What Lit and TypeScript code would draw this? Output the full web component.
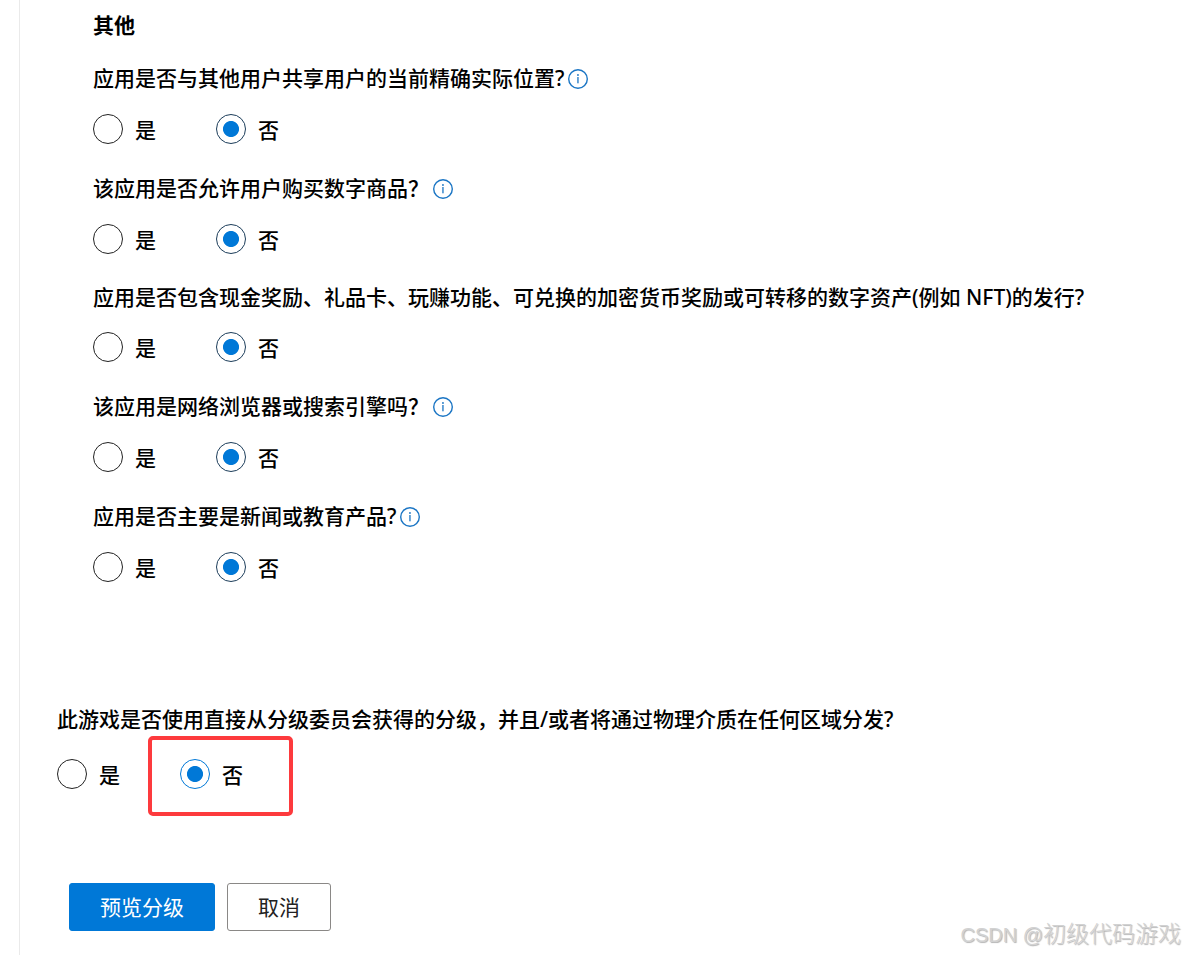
import { LitElement, html, css, svg } from "lit";
import { customElement, property } from "lit/decorators.js";

interface Question {
  id: string;
  text: string;
  info: boolean;
}

const QUESTIONS: Question[] = [
  { id: "location", text: "应用是否与其他用户共享用户的当前精确实际位置?", info: true },
  { id: "purchase", text: "该应用是否允许用户购买数字商品？", info: true },
  { id: "rewards", text: "应用是否包含现金奖励、礼品卡、玩赚功能、可兑换的加密货币奖励或可转移的数字资产(例如 NFT)的发行?", info: false },
  { id: "browser", text: "该应用是网络浏览器或搜索引擎吗？", info: true },
  { id: "news", text: "应用是否主要是新闻或教育产品?", info: true },
];

const infoIcon = svg`<svg width="20" height="20" viewBox="0 0 20 20" aria-hidden="true">
  <circle cx="10" cy="10" r="9.3" fill="none" stroke="#1a75c4" stroke-width="1.4"></circle>
  <rect x="9.3" y="8" width="1.3" height="6.3" fill="#1a75c4"></rect>
  <rect x="9.1" y="5.2" width="1.7" height="1.6" fill="#1a75c4"></rect>
</svg>`;

@customElement("yes-no-question")
class YesNoQuestion extends LitElement {
  @property() name = "";
  @property() text = "";
  @property({ type: Boolean }) info = false;
  @property({ type: Boolean, reflect: true }) marked = false;

  static styles = css`
    :host { display: block; font-weight: 500; }
    fieldset { margin: 0; padding: 0; border: 0; min-width: 0; }
    legend { padding: 0; display: flex; align-items: center; gap: 4px; line-height: 26px; }
    .text { padding-bottom: 2px; }
    .info {
      display: flex; align-items: center; height: 30px; margin: 0; padding: 0;
      border: 0; background: none; cursor: pointer;
    }
    .options { display: flex; gap: 60px; margin-top: 20px; }
    .option { position: relative; display: flex; align-items: center; gap: 12px; line-height: 28px; }
    .option span { padding-top: 2px; }
    .dot {
      appearance: none; box-sizing: border-box; flex: none; width: 30px; height: 30px; margin: 0;
      border: 1px solid #222; border-radius: 50%; background: #fff;
    }
    .dot:checked {
      border-color: #1c3d5a;
      background: radial-gradient(circle, #0078d7 7.6px, #fff 8.4px);
    }
    :host([marked]) .options { margin-top: 25px; }
    :host([marked]) .dot:checked { border-color: #0078d7; }
    :host([marked]) .no::after {
      content: ""; position: absolute; box-sizing: border-box; inset: -23px -50px -27px -32px;
      border: 4px solid #fd3a3d; border-radius: 5px; pointer-events: none;
    }
  `;

  render() {
    return html`<fieldset>
      <legend>
        <span class="text">${this.text}</span>
        ${this.info ? html`<button class="info" type="button" aria-label="详细信息">${infoIcon}</button>` : ""}
      </legend>
      <div class="options">
        <label class="option"><input class="dot" type="radio" name=${this.name} value="yes" /><span>是</span></label>
        <label class="option no"><input class="dot" type="radio" name=${this.name} value="no" checked /><span>否</span></label>
      </div>
    </fieldset>`;
  }
}

@customElement("app-root")
class AppRoot extends LitElement {
  static styles = css`
    :host {
      display: block; position: relative; min-height: 100vh; box-sizing: border-box;
      padding-left: 19px; background: #fff; color: #000;
      font: 21px/30px "Noto Sans", "Noto Sans CJK SC", sans-serif;
    }
    .page {
      box-sizing: border-box; min-height: 100vh; border-left: 1px solid #eaeaea;
      padding: 10px 24px 24px 37px;
    }
    .group { padding-left: 36px; }
    h2 { margin: 0 0 24px; font-size: 21px; line-height: 30px; font-weight: 700; }
    .list { display: flex; flex-direction: column; gap: 30px; }
    .board { margin-top: 124px; }
    .actions { display: flex; gap: 12px; margin-top: 94px; padding-left: 12px; }
    .btn {
      box-sizing: border-box; height: 48px; padding: 0 30px; border: 1px solid #8a8886;
      border-radius: 3px; background: #fff; color: #222; font: inherit; cursor: pointer;
    }
    .primary { border-color: #0078d7; background: #0078d7; color: #fff; }
    .mark {
      position: absolute; right: 4px; bottom: 4px; color: #d2d2d2;
      font: 300 23px/32px "Liberation Sans", "Noto Sans CJK SC", sans-serif;
      text-shadow: 1px 1px 1px #b4b4b4;
    }
    .latin { font-size: 20px; }
  `;

  render() {
    return html`<main class="page">
        <section class="group">
          <h2>其他</h2>
          <div class="list">
            ${QUESTIONS.map((q) => html`<yes-no-question .name=${q.id} .text=${q.text} .info=${q.info}></yes-no-question>`)}
          </div>
        </section>
        <yes-no-question
          class="board" marked name="board"
          text="此游戏是否使用直接从分级委员会获得的分级，并且/或者将通过物理介质在任何区域分发?"
        ></yes-no-question>
        <div class="actions">
          <button class="btn primary" type="button">预览分级</button>
          <button class="btn" type="button">取消</button>
        </div>
      </main>
      <div class="mark"><span class="latin">CSDN @</span>初级代码游戏</div>`;
  }
}
